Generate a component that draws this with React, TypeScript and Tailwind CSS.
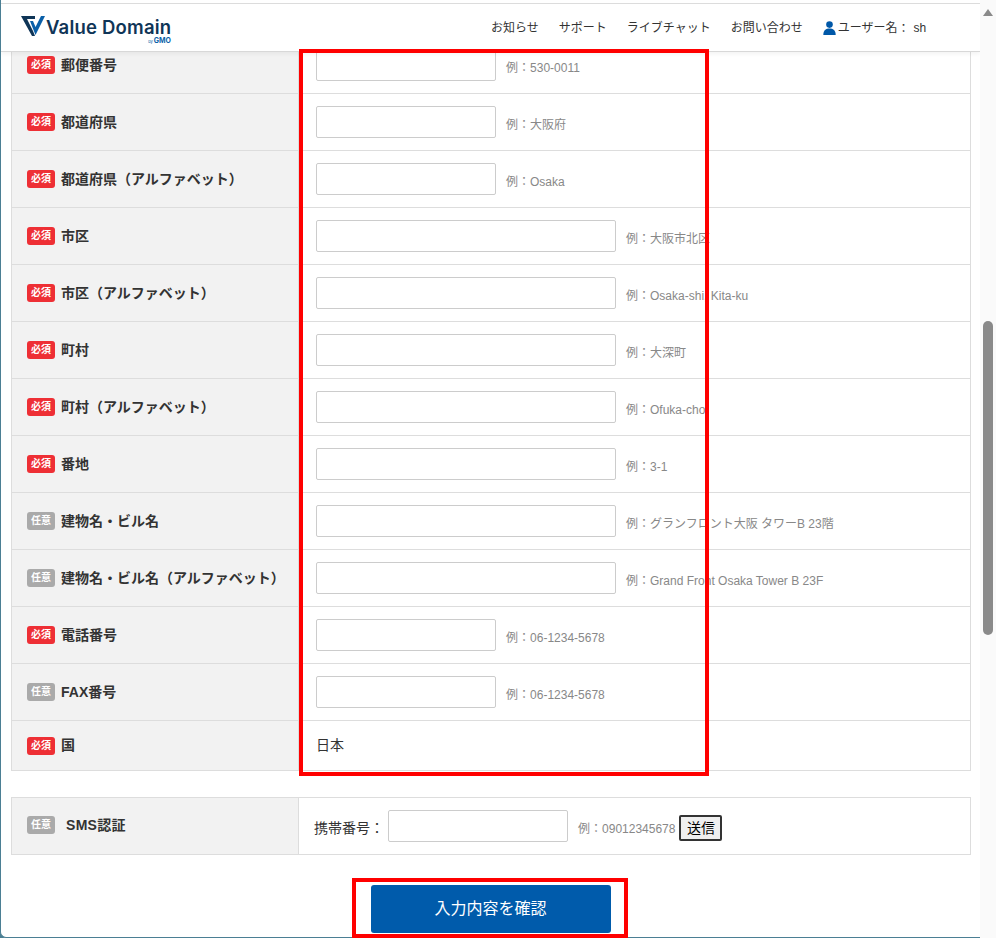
import React from 'react';

const fontStack = "font-['Liberation_Sans','Noto_Sans_CJK_JP',sans-serif]";

interface FieldRow {
    label: string;
    required: boolean;
    wide?: boolean;
    hint: string;
}

const rows: FieldRow[] = [
    { label: '郵便番号', required: true, hint: '530-0011' },
    { label: '都道府県', required: true, hint: '大阪府' },
    { label: '都道府県（アルファベット）', required: true, hint: 'Osaka' },
    { label: '市区', required: true, wide: true, hint: '大阪市北区' },
    { label: '市区（アルファベット）', required: true, wide: true, hint: 'Osaka-shi, Kita-ku' },
    { label: '町村', required: true, wide: true, hint: '大深町' },
    { label: '町村（アルファベット）', required: true, wide: true, hint: 'Ofuka-cho' },
    { label: '番地', required: true, wide: true, hint: '3-1' },
    { label: '建物名・ビル名', required: false, wide: true, hint: 'グランフロント大阪 タワーB 23階' },
    { label: '建物名・ビル名（アルファベット）', required: false, wide: true, hint: 'Grand Front Osaka Tower B 23F' },
    { label: '電話番号', required: true, hint: '06-1234-5678' },
    { label: 'FAX番号', required: false, hint: '06-1234-5678' },
];

const navItems = ['お知らせ', 'サポート', 'ライブチャット', 'お問い合わせ'];

// the TC cut of the font centres the full-width colon, like the reference
const Colon = () => <span className="font-['Noto_Sans_CJK_TC',sans-serif]">：</span>;

const Badge = ({ required }: { required: boolean }) => (
    <span
        className={`flex h-[18px] w-[28px] shrink-0 items-center justify-center rounded-[3px] text-[10px] font-bold leading-none text-white ${
            required ? 'bg-[#ee2f35]' : 'bg-[#aaaaaa]'
        }`}
    >
        {required ? '必須' : '任意'}
    </span>
);

const TextInput = ({ wide }: { wide?: boolean }) => (
    <input
        type="text"
        className={`h-[32px] shrink-0 rounded-[2px] border border-[#cccccc] bg-white ${wide ? 'w-[300px]' : 'w-[180px]'}`}
    />
);

const Hint = ({ children }: { children: React.ReactNode }) => (
    <span className="ml-[10px] mt-[4px] whitespace-nowrap text-[12px] text-[#888888]">
        例<Colon />
        {children}
    </span>
);

const Logo = () => (
    <div className="relative h-[30px] w-[152px]">
        <svg width="24" height="20" viewBox="0 0 24 20" className="absolute left-0 top-[3px]">
            <polygon points="0,0 14,0 14,3 6,3 12,15 14,20 11,20" fill="#0f3557" />
            <polygon points="9,5 12,5 14.5,11 20,0 24,0 14.5,19" fill="#0a5fa8" />
        </svg>
        <span className="absolute left-[25px] top-[4px] whitespace-nowrap font-['Inter',sans-serif] text-[18.5px] font-semibold leading-[20px] tracking-[0.2px] text-[#0f3557]">
            Value Domain
        </span>
        <span className="absolute right-[2px] top-[25px] whitespace-nowrap font-['Inter',sans-serif] text-[7px] font-bold leading-[6px] text-[#0a5fa8]">
            <span className="mr-[1px] text-[4px] font-normal">by</span>GMO
        </span>
    </div>
);

const Header = () => (
    <header className="relative z-10 flex h-[48px] shrink-0 items-center border-b border-[#d8d8d8] bg-white pl-[20px] pr-[53px] shadow-[0_2px_4px_rgba(0,0,0,0.05)]">
        <Logo />
        <nav className="ml-auto flex w-[436px] items-center gap-[20px] overflow-hidden whitespace-nowrap text-[12px] text-[#333333]">
            {navItems.map(item => (
                <span key={item}>{item}</span>
            ))}
            <span className="flex items-center">
                <svg width="13" height="14" viewBox="0 0 13 14" className="mr-[2px]">
                    <circle cx="6.5" cy="3.6" r="3.3" fill="#0058a8" />
                    <path d="M0.3 14 C0.3 9.4 3 7.6 6.5 7.6 C10 7.6 12.7 9.4 12.7 14 Z" fill="#0058a8" />
                </svg>
                ユーザー名<Colon />
                <span className="ml-[4px]">sh</span>
            </span>
        </nav>
    </header>
);

export default function App() {
    return (
        <div className={`relative flex h-[938px] w-[996px] overflow-hidden bg-[#4b7f94] ${fontStack}`}>
            <div className="flex w-[980px] shrink-0 flex-col overflow-hidden rounded-bl-[6px] border-b border-l border-[#4b7f94] bg-white pt-[3px]">
                <div className="h-px shrink-0 bg-[#dddddd]" />
                <Header />

                <main className="min-h-0 flex-1 overflow-hidden">
                    <div className="-mt-[15px] ml-[10px] w-[960px]">
                        <div className="border-x border-b border-[#dddddd]">
                            {rows.map(row => (
                                <div key={row.label} className="flex h-[57px] border-b border-[#dddddd]">
                                    <div className="flex w-[287px] shrink-0 items-center border-r border-[#dddddd] bg-[#f2f2f2] pl-[15px] text-[14px] font-bold text-[#333333]">
                                        <Badge required={row.required} />
                                        <span className="ml-[6px] whitespace-nowrap">{row.label}</span>
                                    </div>
                                    <div className="flex flex-1 items-center pl-[17px]">
                                        <TextInput wide={row.wide} />
                                        <Hint>{row.hint}</Hint>
                                    </div>
                                </div>
                            ))}
                            <div className="flex h-[49px]">
                                <div className="flex w-[287px] shrink-0 items-center border-r border-[#dddddd] bg-[#f2f2f2] pl-[15px] text-[14px] font-bold text-[#333333]">
                                    <Badge required />
                                    <span className="ml-[6px]">国</span>
                                </div>
                                <div className="flex flex-1 items-center pl-[17px] text-[14px] text-[#333333]">日本</div>
                            </div>
                        </div>

                        <div className="mt-[26px] flex h-[58px] border border-[#dddddd]">
                            <div className="flex w-[287px] shrink-0 items-center border-r border-[#dddddd] bg-[#f2f2f2] pb-[2px] pl-[15px] text-[14px] font-bold text-[#333333]">
                                <Badge required={false} />
                                <span className="ml-[11px] tracking-[0.3px]">SMS認証</span>
                            </div>
                            <div className="flex flex-1 items-center pl-[15px]">
                                <span className="mt-[4px] text-[14px] text-[#333333]">
                                    携帯番号
                                    <Colon />
                                </span>
                                <span className="ml-[4px] flex">
                                    <TextInput />
                                </span>
                                <Hint>09012345678</Hint>
                                <button className="ml-[4px] mt-[4px] h-[26px] w-[43px] rounded-[2px] border-2 border-[#333333] bg-[#efefef] text-[14px] text-black">
                                    送信
                                </button>
                            </div>
                        </div>

                        <div className="mt-[30px] flex justify-center pr-[1px]">
                            <button className="h-[48px] w-[240px] rounded-[3px] bg-[#005bab] text-[16px] text-white">
                                入力内容を確認
                            </button>
                        </div>
                    </div>
                </main>
            </div>

            <div className="relative flex-1 bg-[#fafafa]">
                <svg width="10" height="7" viewBox="0 0 10 7" className="absolute left-[3px] top-[9px]">
                    <polygon points="5,0 10,7 0,7" fill="#8a8a8a" />
                </svg>
                <div className="absolute left-[3px] top-[321px] h-[314px] w-[10px] rounded-[5px] bg-[#8a8a8a]" />
            </div>

            {/* highlight boxes drawn over the page */}
            <div className="pointer-events-none absolute left-[299px] top-[49px] z-20 h-[727px] w-[410px] border-4 border-[#ff0000]" />
            <div className="pointer-events-none absolute left-[352px] top-[878px] z-20 h-[60px] w-[276px] border-4 border-[#ff0000]" />
        </div>
    );
}
